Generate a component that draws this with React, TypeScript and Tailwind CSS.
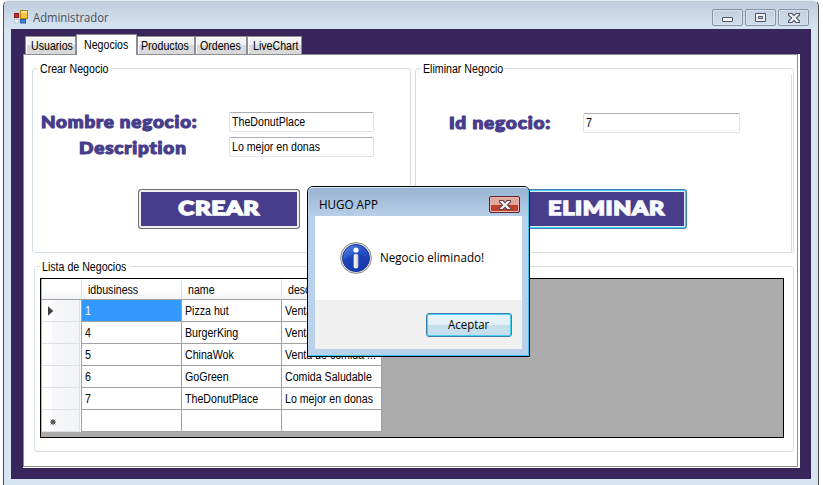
import React from "react";

const sans = "font-['Liberation_Sans',Arial,sans-serif] text-[12px] leading-[14px] text-black whitespace-nowrap";
const segoe = "font-['Open_Sans','Noto_Sans',sans-serif] text-[12px] leading-[16px] whitespace-nowrap";
const display = "font-['Lato',sans-serif] font-black whitespace-nowrap inline-block";

function Narrow({ children, className = "" }: { children: React.ReactNode; className?: string }) {
  return <span className={`inline-block origin-left scale-x-[0.885] ${className}`}>{children}</span>;
}

function Tab({ label, width, pad = "pl-[5px]" }: { label: string; width: string; pad?: string }) {
  return (
    <div className={`${sans} ${width} ${pad} h-[18px] shrink-0 border border-b-0 border-[#8c8e94] bg-linear-to-b from-[#f3f3f3] from-50% to-[#d9d9d9] to-50% pt-[2px] shadow-[inset_1px_1px_0_#fff]`}>
      <Narrow>{label}</Narrow>
    </div>
  );
}

function Group({ title, className, legend, children }: { title: string; className: string; legend: string; children: React.ReactNode }) {
  return (
    <fieldset className={`${className} min-w-0 shrink-0 rounded-[3px] border border-[#d5dfe5]`}>
      <legend className={`${sans} ${legend} ml-[5px] h-[13px] pl-[2px] leading-[13px]`}>
        <Narrow>{title}</Narrow>
      </legend>
      {children}
    </fieldset>
  );
}

function Field({ value, width }: { value: string; width: string }) {
  return (
    <div className={`${sans} ${width} h-[20px] shrink-0 rounded-[2px] border border-[#e2e3ea] border-t-[#abadb3] bg-white pl-[2px] pt-[2px]`}>
      <Narrow>{value}</Narrow>
    </div>
  );
}

function CaptionButton({ children }: { children: React.ReactNode }) {
  return (
    <div className="flex h-[17px] w-[31px] items-center justify-center rounded-[2px] border border-[#8493a8] bg-linear-to-b from-[#c3d0df] to-[#d0deec] shadow-[inset_0_0_0_1px_#d8e3ee]">
      {children}
    </div>
  );
}

function Cross({ stroke }: { stroke: string }) {
  return (
    <svg className="shrink-0" width="12" height="10" viewBox="0 0 12 10">
      <path d="M.5.5H4L6 2.6 8 .5H11.5V2L8.4 5 11.5 8V9.5H8L6 7.4 4 9.5H.5V8L3.6 5 .5 2Z" fill="#f4f4f4" stroke={stroke} strokeWidth="1.1" />
    </svg>
  );
}

const rows = [
  ["1", "Pizza hut", "Venta de pizza"],
  ["4", "BurgerKing", "Venta de comida"],
  ["5", "ChinaWok", "Venta de comida ..."],
  ["6", "GoGreen", "Comida Saludable"],
  ["7", "TheDonutPlace", "Lo mejor en donas"],
  ["", "", ""],
];

function Grid() {
  return (
    <div className="h-[160px] w-[744px] border border-black bg-[#ababab]">
      <div className={`${sans} flex h-[21px] w-[341px] border-b border-[#a0a0a0] bg-linear-to-b from-white from-50% to-[#f3f4f6]`}>
        <div className="w-[41px] border-r border-[#dfe0e2] border-l border-l-[#b5b5b5]" />
        {["idbusiness", "name", "description"].map((h) => (
          <div key={h} className="w-[100px] overflow-hidden border-r border-[#dfe0e2] pl-[6px] pt-[4px]">
            <Narrow>{h}</Narrow>
          </div>
        ))}
      </div>
      {rows.map((r, i) => (
        <div key={i} className={`${sans} flex h-[22px] w-[341px]`}>
          <div className="flex w-[41px] items-center border-r border-[#a0a0a0] border-l border-l-[#b5b5b5] bg-white">
            <div className="flex h-[22px] w-[38px] items-center border-b border-r border-[#dfe0e2] bg-linear-to-r from-white from-25% via-[#f7f8fa] via-30% to-[#f2f3f5] pl-[6px]">
              {i === 0 && (
                <svg className="mt-px" width="6" height="10" viewBox="0 0 6 10">
                  <path d="M0 .3 5.3 5 0 9.7Z" fill="#404040" />
                </svg>
              )}
              {i === 5 && (
                <svg className="ml-[2px] mt-[3px]" width="6" height="6" viewBox="0 0 6 6">
                  <circle cx="3" cy="3" r="1.8" fill="#404040" />
                  <path d="M3 0V6M0 3H6M.7.7 5.3 5.3M5.3.7.7 5.3" stroke="#505050" strokeWidth="1" />
                </svg>
              )}
            </div>
          </div>
          {r.map((c, j) => (
            <div
              key={j}
              className={`w-[100px] overflow-hidden border-b border-r border-[#a0a0a0] pl-[3px] pt-[4px] ${
                i === 0 && j === 0 ? "bg-[#3399ff] text-white" : "bg-white"
              }`}
            >
              <Narrow>{c}</Narrow>
            </div>
          ))}
        </div>
      ))}
    </div>
  );
}

function Dialog() {
  return (
    <div className="absolute left-[307px] top-[186px] h-[171px] w-[223px] rounded-t-[6px] border border-black bg-[#b9d1ea]">
      <div className="flex h-[169px] flex-col rounded-t-[5px] border border-[#b9d1ea] border-t-[#dce9f5] border-b-[#35c9ee] border-r-[#35c9ee] bg-linear-to-b from-[#99b4d1] to-[#b9d1ea] to-[30px]">
        <div className="flex h-[28px] shrink-0 items-start pl-[10px] pr-[8px]">
          <span className={`${segoe} mt-[9px] inline-block origin-left scale-x-[0.97] text-black`}>HUGO APP</span>
          <div className="ml-auto mt-[8px] flex h-[17px] w-[31px] items-center justify-center rounded-[2px] border border-[#5b2430] bg-linear-to-b from-[#e0a89d] from-50% to-[#c0402e] to-50% shadow-[inset_0_0_0_1px_#e8b6ab]">
            <Cross stroke="#6b4048" />
          </div>
        </div>
        <div className="mx-[6px] flex h-[84px] w-[207px] shrink-0 items-center bg-white pl-[25px]">
          <svg width="32" height="32" viewBox="0 0 32 32">
            <defs>
              <linearGradient id="info" x1="0" y1="0" x2="0.6" y2="1">
                <stop offset="0" stopColor="#5f8cea" />
                <stop offset=".5" stopColor="#2550c4" />
                <stop offset="1" stopColor="#1c3cb4" />
              </linearGradient>
              <linearGradient id="stem" x1="0" x2="1">
                <stop offset="0" stopColor="#fff" />
                <stop offset="1" stopColor="#c9cbd0" />
              </linearGradient>
            </defs>
            <circle cx="16" cy="16" r="15.4" fill="#e4e4e4" stroke="#8a8a8a" />
            <circle cx="16" cy="16" r="13.5" fill="url(#info)" stroke="#1b3794" />
            <path d="M3 18C9 12 19 11 29 16A13 13 0 0 1 3 18Z" fill="#1435ab" opacity=".45" />
            <circle cx="16" cy="8" r="2.6" fill="#fff" />
            <rect x="13.7" y="12" width="4.6" height="14.5" rx="1.8" fill="url(#stem)" />
          </svg>
          <span className={`${segoe} ml-[8px] inline-block origin-left scale-x-[0.97] text-black`}>Negocio eliminado!</span>
        </div>
        <div className="mx-[6px] h-[49px] w-[207px] shrink-0 bg-[#f0f0f0] pl-[111px] pt-[13px]">
          <div className="flex h-[24px] w-[86px] items-center justify-center rounded-[3px] border border-[#3c7fb1] bg-linear-to-b from-[#e5f1f8] from-50% to-[#c5dfed] to-50% shadow-[inset_0_0_0_1px_#48d0f5]">
            <span className={`${segoe} inline-block scale-x-[0.95] text-black`}>Aceptar</span>
          </div>
        </div>
      </div>
    </div>
  );
}

export default function App() {
  return (
    <div className="relative h-[485px] w-[823px] overflow-hidden bg-white">
      <div className="ml-[3px] h-[485px] w-[816px] overflow-hidden rounded-t-[6px] border-x border-t border-[#4b4d50] border-t-[#e4ebf1] bg-[#d7e4f2]">
        <div className="flex h-[28px] items-center bg-linear-to-b from-[#bfcddb] to-[#d7e4f2] pl-[10px] pr-[9px]">
          <svg className="mt-[4px]" width="14" height="14" viewBox="0 0 14 14">
            <rect x=".5" y="3.5" width="4" height="4" fill="#c62d22" stroke="#8e1d15" />
            <rect x="6.5" y=".5" width="7" height="8" fill="#fbc43c" stroke="#b58114" />
            <rect x="7" y="1" width="6" height="2" fill="#ffe394" />
            <rect x="6.5" y="9.5" width="5" height="3.5" fill="#3e80de" stroke="#275fac" />
            <rect x=".5" y="9.5" width="4" height="3.5" fill="#eef2f6" stroke="#c3cbd4" />
          </svg>
          <span className={`${segoe} ml-[5px] mt-[5px] inline-block origin-left scale-x-[0.94] text-[#4a5058]`}>Administrador</span>
          <div className="ml-auto mt-[5px] flex gap-[2px]">
            <CaptionButton>
              <svg className="mt-[3px]" width="11" height="5" viewBox="0 0 11 5">
                <rect x=".5" y=".5" width="10" height="4" rx=".5" fill="#f4f4f4" stroke="#4f566b" />
              </svg>
            </CaptionButton>
            <CaptionButton>
              <svg width="11" height="9" viewBox="0 0 11 9">
                <path d="M.5.5H10.5V8.5H.5ZM3.5 3.5V5.5H7.5V3.5Z" fill="#eee" fillRule="evenodd" stroke="#4f566b" />
              </svg>
            </CaptionButton>
            <CaptionButton>
              <Cross stroke="#4f566b" />
            </CaptionButton>
          </div>
        </div>
        <div className="mx-[7px] h-[450px] bg-[#38255c] pl-[12px] pt-[5px]">
          <div className="flex h-[20px] items-end pl-[2px]">
            <Tab label="Usuarios" width="w-[51px]" />
            <div className={`${sans} relative z-10 -mb-px h-[21px] w-[61px] border border-b-0 border-[#8c8e94] bg-white pl-[7px] pt-[3px]`}>
              <Narrow>Negocios</Narrow>
            </div>
            <Tab label="Productos" width="w-[58px]" pad="pl-[3px]" />
            <Tab label="Ordenes" width="w-[52px]" pad="pl-[4px]" />
            <Tab label="LiveChart" width="w-[55px]" />
          </div>
          <div className="h-[414px] w-[777px] bg-white pr-[2px]">
            <div className="h-[413px] border border-[#8c8e94] pl-[8px] pt-[7px]">
              <div className="flex gap-[4px]">
                <Group title="Crear Negocio" legend="w-[73px]" className="h-[191px] w-[379px]">
                  <div className="pt-[37px]">
                    <div className="flex h-[20px] pl-[8px]">
                      <div className="w-[188px] text-[16px] leading-[19px] tracking-[0.7px] text-[#483d8b]">
                        <span className={`${display} origin-left scale-x-[1.175] [-webkit-text-stroke:1.1px_#483d8b]`}>Nombre negocio:</span>
                      </div>
                      <Field value="TheDonutPlace" width="w-[145px]" />
                    </div>
                    <div className="mt-[5px] flex h-[20px] pl-[46px]">
                      <div className="w-[150px] text-[16px] leading-[22px] tracking-[0.7px] text-[#483d8b]">
                        <span className={`${display} origin-left scale-x-[1.185] [-webkit-text-stroke:1.1px_#483d8b]`}>Description</span>
                      </div>
                      <Field value="Lo mejor en donas" width="w-[145px]" />
                    </div>
                    <div className="ml-[105px] mt-[32px] flex h-[40px] w-[162px] justify-center rounded-[3px] border border-[#707070] bg-[#483d8b] pt-[6px] text-[19px] leading-[24px] tracking-[0.5px] text-white shadow-[inset_0_0_0_2px_#f0f0f0]">
                      <span className={`${display} scale-x-[1.27] [-webkit-text-stroke:1.4px_white]`}>CREAR</span>
                    </div>
                  </div>
                </Group>
                <Group title="Eliminar Negocio" legend="w-[83px]" className="h-[191px] w-[379px]">
                  <div className="mr-[1px] h-[177px] border-r border-[#d5dfe5] pt-[38px]">
                    <div className="flex h-[20px] pl-[33px]">
                      <div className="w-[134px] text-[16px] leading-[20px] tracking-[0.7px] text-[#483d8b]">
                        <span className={`${display} origin-left scale-x-[1.19] [-webkit-text-stroke:1.1px_#483d8b]`}>Id negocio:</span>
                      </div>
                      <Field value="7" width="w-[157px]" />
                    </div>
                    <div className="ml-[109px] mt-[56px] flex h-[40px] w-[162px] justify-center rounded-[3px] border border-[#3c7fb1] bg-[#483d8b] pt-[6px] text-[19px] leading-[24px] tracking-[0.5px] text-[#f8f8ff] shadow-[inset_0_0_0_1px_#48d0f5,inset_0_0_0_2px_#e0e8ee]">
                      <span className={`${display} scale-x-[1.23] [-webkit-text-stroke:1.4px_#f8f8ff]`}>ELIMINAR</span>
                    </div>
                  </div>
                </Group>
              </div>
              <Group title="Lista de Negocios" legend="w-[90px]" className="ml-[2px] mt-[7px] h-[192px] w-[760px]">
                <div className="pl-[5px] pt-[5px]">
                  <Grid />
                </div>
              </Group>
            </div>
          </div>
        </div>
      </div>
      <Dialog />
    </div>
  );
}
